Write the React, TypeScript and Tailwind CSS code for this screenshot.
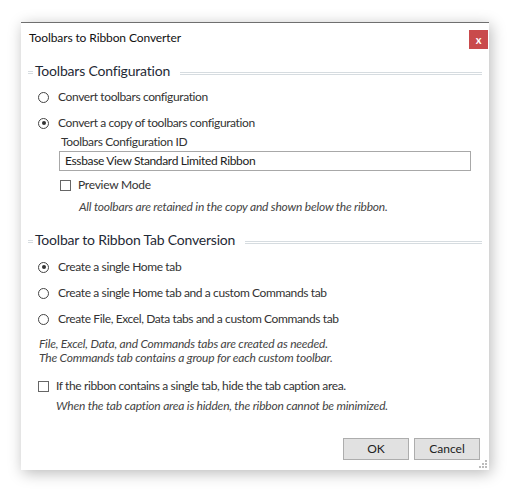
const font = { fontFamily: 'Lato, "Open Sans", sans-serif' };

function Radio({ checked }: { checked?: boolean }) {
  return (
    <span className="w-[11px] h-[11px] rounded-full border border-[#444] flex items-center justify-center bg-white shrink-0">
      {checked && <span className="w-[4px] h-[4px] rounded-full bg-[#333]" />}
    </span>
  );
}

function Check() {
  return <span className="w-[11px] h-[11px] border border-[#666] bg-white shrink-0" />;
}

function Header({ text }: { text: string }) {
  return (
    <div className="flex items-center h-[20px] pl-[7px] pr-[7px]">
      <span className="w-[5px] flex flex-col gap-[1px] mt-[3px]">
        <span className="h-[1px] bg-[#d6dce0]" />
        <span className="h-[1px] bg-[#d6dce0]" />
      </span>
      <span className="ml-[2px] text-[14px] tracking-[-0.2px] text-[#1f2a36] leading-none">{text}</span>
      <span className="flex-1 ml-[10px] flex flex-col gap-[1px] mt-[4px]">
        <span className="h-[1px] bg-[#d6dce0]" />
        <span className="h-[1px] bg-[#d6dce0]" />
      </span>
    </div>
  );
}

function RadioRow({ label, checked, mt }: { label: string; checked?: boolean; mt: string }) {
  return (
    <div className={`flex items-center h-[20px] pl-[17px] ${mt}`}>
      <Radio checked={checked} />
      <span className="ml-[9px] text-[12px] tracking-[-0.38px] text-[#333]">{label}</span>
    </div>
  );
}

export default function App() {
  return (
    <div className="w-[509px] h-[492px] bg-white pt-[22px] pl-[21px]" style={font}>
      <div className="relative w-[468px] h-[448px] bg-white border-t border-[#6f6f6f] shadow-[2px_3px_14px_rgba(0,0,0,0.28)] flex flex-col">
        <div className="flex justify-between h-[30px]">
          <span className="pl-[8px] flex items-center text-[12px] tracking-[-0.1px] text-[#111]">Toolbars to Ribbon Converter</span>
          <button className="mt-[7px] mr-[1px] w-[19px] h-[19px] bg-[#c94a4c] text-white text-[11px] font-bold leading-none flex items-center justify-center">
            x
          </button>
        </div>
        <div className="mt-[8px]">
          <Header text="Toolbars Configuration" />
        </div>
        <RadioRow label="Convert toolbars configuration" mt="mt-[6px]" />
        <RadioRow label="Convert a copy of toolbars configuration" checked mt="mt-[6px]" />
        <div className="h-[18px] flex items-center pl-[40px] text-[12px] tracking-[-0.35px] text-[#333]">Toolbars Configuration ID</div>
        <div className="ml-[38px] w-[412px] h-[20px] border border-[#a8a8a8] flex items-center pl-[5px] text-[12px] tracking-[-0.35px] text-[#222]">
          Essbase View Standard Limited Ribbon
        </div>
        <div className="mt-[4px] h-[20px] flex items-center pl-[39px]">
          <Check />
          <span className="ml-[7px] text-[12px] tracking-[-0.25px] text-[#333]">Preview Mode</span>
        </div>
        <div className="mt-[2px] h-[20px] flex items-center pl-[58px] text-[12px] italic tracking-[-0.2px] text-[#444]">
          All toolbars are retained in the copy and shown below the ribbon.
        </div>
        <div className="mt-[13px]">
          <Header text="Toolbar to Ribbon Tab Conversion" />
        </div>
        <RadioRow label="Create a single Home tab" checked mt="mt-[7px]" />
        <RadioRow label="Create a single Home tab and a custom Commands tab" mt="mt-[6px]" />
        <RadioRow label="Create File, Excel, Data tabs and a custom Commands tab" mt="mt-[6px]" />
        <div className="mt-[8px] pl-[18px] text-[12px] italic tracking-[-0.2px] text-[#444] leading-[14px]">
          <div>File, Excel, Data, and Commands tabs are created as needed.</div>
          <div>The Commands tab contains a group for each custom toolbar.</div>
        </div>
        <div className="mt-[11px] h-[20px] flex items-center pl-[17px]">
          <Check />
          <span className="ml-[7px] text-[12px] tracking-[-0.38px] text-[#333]">If the ribbon contains a single tab, hide the tab caption area.</span>
        </div>
        <div className="h-[20px] flex items-center pl-[35px] text-[12px] italic tracking-[-0.2px] text-[#444]">
          When the tab caption area is hidden, the ribbon cannot be minimized.
        </div>
        <div className="mt-[22px] flex justify-end gap-[5px] pr-[9px]">
          <button className="w-[66px] h-[22px] bg-[#e1e1e1] border border-[#adadad] text-[12px] text-[#222]">OK</button>
          <button className="w-[66px] h-[22px] bg-[#e1e1e1] border border-[#adadad] text-[12px] text-[#222]">Cancel</button>
        </div>
        <svg className="absolute right-[2px] bottom-[2px]" width="8" height="8" viewBox="0 0 8 8">
          <rect x="6" y="0" width="2" height="2" fill="#bcbcbc" />
          <rect x="3" y="3" width="2" height="2" fill="#bcbcbc" />
          <rect x="6" y="3" width="2" height="2" fill="#bcbcbc" />
          <rect x="0" y="6" width="2" height="2" fill="#bcbcbc" />
          <rect x="3" y="6" width="2" height="2" fill="#bcbcbc" />
          <rect x="6" y="6" width="2" height="2" fill="#bcbcbc" />
        </svg>
      </div>
    </div>
  );
}
